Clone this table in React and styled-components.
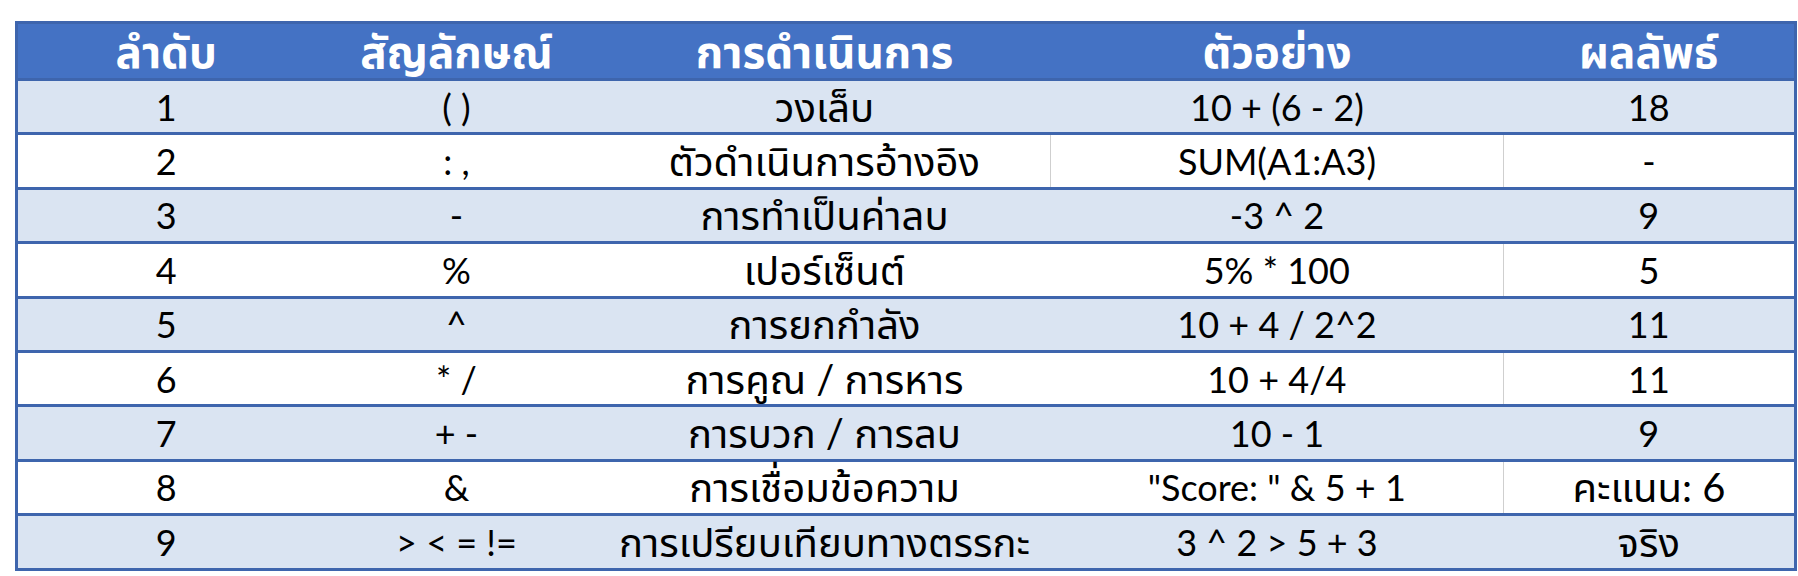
import React from "react";
import styled, { createGlobalStyle } from "styled-components";

const Global = createGlobalStyle`
  html, body { margin: 0; padding: 0; background: #ffffff; }
  body { font-family: Lato, "Noto Sans Thai", "Leelawadee UI", Tahoma, "Noto Sans", sans-serif; }
`;

const Page = styled.div`
  padding: 21px 4px 0 15px;
  width: 1798px;
  box-sizing: border-box;
`;

const Table = styled.table`
  width: 1779px;
  border-collapse: collapse;
  table-layout: fixed;
  border: 3px solid #3e65ad;
`;

const HeadRow = styled.tr`
  height: 57px;
  background: #4472c4;
`;

const HeadCell = styled.th`
  color: #ffffff;
  font-weight: 700;
  font-size: 44px;
  padding: 0;
  text-align: center;
  vertical-align: middle;
  line-height: 1;
  border-bottom: 3px solid #3e65ad;
`;

const Row = styled.tr`
  height: 54.4px;
  background: ${(p) => (p.$band ? "#dae4f2" : "#ffffff")};
  border-bottom: 3px solid #3e65ad;
`;

const Cell = styled.td`
  color: #000000;
  font-size: ${(p) => (p.$thai ? "40px" : "36px")};
  padding: 0;
  text-align: center;
  vertical-align: middle;
  line-height: 1;
  border-right: ${(p) => (p.$divider ? "1px solid #cfcfcf" : "none")};
`;

const Col = styled.col``;

const widths = [298, 284, 452, 453, 292];
const headers = ["ลำดับ", "สัญลักษณ์", "การดำเนินการ", "ตัวอย่าง", "ผลลัพธ์"];

const rows = [
  ["1", "( )", "วงเล็บ", "10 + (6 - 2)", "18"],
  ["2", ": ,", "ตัวดำเนินการอ้างอิง", "SUM(A1:A3)", "-"],
  ["3", "-", "การทำเป็นค่าลบ", "-3 ^ 2", "9"],
  ["4", "%", "เปอร์เซ็นต์", "5% * 100", "5"],
  ["5", "^", "การยกกำลัง", "10 + 4 / 2^2", "11"],
  ["6", "* /", "การคูณ / การหาร", "10 + 4/4", "11"],
  ["7", "+ -", "การบวก / การลบ", "10 - 1", "9"],
  ["8", "&", "การเชื่อมข้อความ", "\"Score: \" & 5 + 1", "คะแนน: 6"],
  ["9", "> < = !=", "การเปรียบเทียบทางตรรกะ", "3 ^ 2 > 5 + 3", "จริง"],
];

const isThai = (s) => /[\u0E00-\u0E7F]/.test(s);

export default function App() {
  return (
    <Page>
      <Global />
      <Table>
        <colgroup>
          {widths.map((w, i) => (
            <Col key={i} style={{ width: w }} />
          ))}
        </colgroup>
        <thead>
          <HeadRow>
            {headers.map((h) => (
              <HeadCell key={h}>{h}</HeadCell>
            ))}
          </HeadRow>
        </thead>
        <tbody>
          {rows.map((r, i) => {
            const band = i % 2 === 0;
            return (
              <Row key={i} $band={band}>
                {r.map((c, j) => (
                  <Cell
                    key={j}
                    $thai={isThai(c)}
                    $divider={!band && (j === 3 || (i === 1 && j === 2))}
                  >
                    {c}
                  </Cell>
                ))}
              </Row>
            );
          })}
        </tbody>
      </Table>
    </Page>
  );
}
